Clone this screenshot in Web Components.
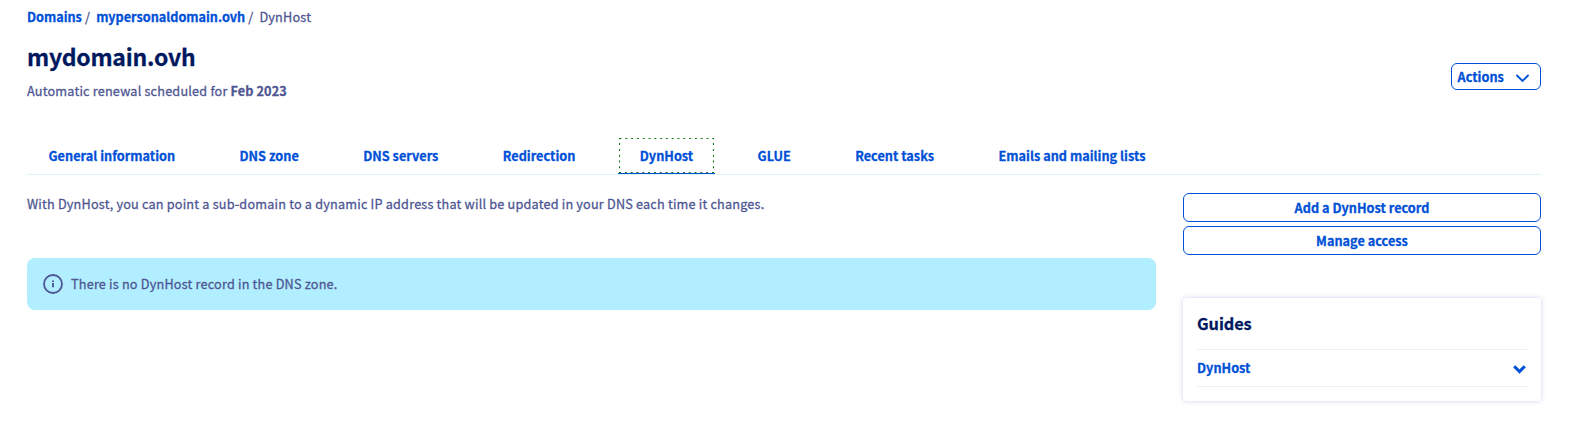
<!DOCTYPE html>
<html lang="en">
<head>
<meta charset="utf-8">
<title>DynHost</title>
<style>
body{margin:0;background:#fff;font-family:"Noto Sans CJK SC","Noto Sans",sans-serif;font-size:12.7px;letter-spacing:.185px;line-height:21px;color:#4d5592;-webkit-text-stroke:.27px}
</style>
</head>
<body>
<domain-page></domain-page>
<script>
function define(name, html) {
  const t = document.createElement('template');
  t.innerHTML = html;
  customElements.define(name, class extends HTMLElement {
    constructor() {
      super();
      this.attachShadow({ mode: 'open' }).append(t.content.cloneNode(true));
    }
  });
}

define('bread-crumb', `<style>
:host{display:flex;height:21px;white-space:pre}
::slotted(a){color:#0050d7;font-weight:700;font-size:12.7px;letter-spacing:-.02px}
</style><slot></slot>`);

define('action-button', `<style>
:host{display:flex;box-sizing:border-box;align-items:center;justify-content:center;height:29px;border:1px solid #0050d7;border-radius:6px;color:#0050d7;font-size:12.7px;letter-spacing:.02px;font-weight:700;white-space:nowrap}
:host([menu]){width:90px;height:27px;justify-content:space-between;padding:0 11px 0 5.500px}
::slotted(svg){margin-top:3px}
</style><slot></slot><slot name="icon"></slot>`);

define('tab-item', `<style>
:host{display:block;box-sizing:border-box;height:36px;padding:7px 21.5px 0;color:#0050d7;font-size:12.7px;letter-spacing:.02px;font-weight:700;white-space:nowrap}
:host([active]){border-bottom:1px solid #0050d7;position:relative}
.focus{position:absolute;left:1px;top:0;width:95px;height:35px}
:host(:not([active])) .focus{display:none}
</style><slot></slot><svg class="focus" viewBox="0 0 95 35"><rect x=".5" y=".5" width="94" height="34" fill="none" stroke="#107810" stroke-width="1.1" stroke-dasharray="2 3.800"/></svg>`);

define('tab-bar', `<style>
:host{display:flex;gap:21.35px;height:36px;border-bottom:1px solid #dff2f8}
</style><slot></slot>`);

define('info-message', `<style>
:host{display:flex;align-items:center;gap:8px;box-sizing:border-box;height:52px;padding:0 0 1px 16px;border-radius:8px;background:#b1eeff}
svg{display:block}
</style><svg width="20" height="20" viewBox="0 0 20 20" fill="none" stroke="#4d5592"><circle cx="10" cy="10" r="9" stroke-width="1.8"/><path d="M10 6.500v1.400M10 9v4.300" stroke-width="1.9"/></svg><slot></slot>`);

define('guide-card', `<style>
:host{display:block;box-sizing:border-box;height:103px;padding:13px 14px;border-radius:4px;box-shadow:0 0 5px rgba(77,85,200,.28)}
h2{margin:0;height:38px;font-size:16.3px;letter-spacing:-.07px;line-height:24px;color:#00185e;font-weight:700}
.row{display:flex;align-items:center;justify-content:space-between;height:35px;padding-bottom:1px;border-top:1px solid #eee;border-bottom:1px solid #eee;color:#0050d7;font-size:12.7px;letter-spacing:.02px;font-weight:700}
svg{margin:3px 1px 0 0}
</style><h2><slot name="title"></slot></h2><div class="row"><slot></slot><svg width="13" height="9" viewBox="0 0 13 9" fill="none" stroke="#0050d7" stroke-width="3"><path d="M1.200 1.300 6.500 6.600l5.300-5.300"/></svg></div>`);

define('domain-page', `<style>
:host{display:block;box-sizing:border-box;width:1569px;height:425px;padding:6px 28px 0 27px;overflow:hidden}
header{display:flex;justify-content:space-between;height:111px}
h1{margin:15px 0 0;font-size:23px;letter-spacing:-.24px;line-height:28px;color:#00185e;font-weight:700}
b{font-size:12.7px;letter-spacing:.08px}
p{margin:0;white-space:nowrap}
.renew{margin-top:10px}
header action-button{margin-top:36px}
main{display:grid;grid-template-columns:1129px 358px;column-gap:27px;padding-top:18px}
.intro{margin:0 0 44px}
aside{display:flex;flex-direction:column;gap:4px}
guide-card{margin-top:39px}
</style>
<bread-crumb><a>Domains</a><span> /  </span><a>mypersonaldomain.ovh</a><span> /  </span><span>DynHost</span></bread-crumb>
<header><div><h1>mydomain.ovh</h1><p class="renew">Automatic renewal scheduled for <b>Feb 2023</b></p></div>
<action-button menu><span>Actions</span><svg slot="icon" width="13" height="9" viewBox="0 0 13 9" fill="none" stroke="#0050d7" stroke-width="1.800" stroke-linecap="round"><path d="M1 1.500 6.500 7 12 1.500"/></svg></action-button></header>
<tab-bar><tab-item>General information</tab-item><tab-item>DNS zone</tab-item><tab-item>DNS servers</tab-item><tab-item>Redirection</tab-item><tab-item active>DynHost</tab-item><tab-item>GLUE</tab-item><tab-item>Recent tasks</tab-item><tab-item>Emails and mailing lists</tab-item></tab-bar>
<main><section><p class="intro">With DynHost, you can point a sub-domain to a dynamic IP address that will be updated in your DNS each time it changes.</p>
<info-message><span>There is no DynHost record in the DNS zone.</span></info-message></section>
<aside><action-button>Add a DynHost record</action-button><action-button>Manage access</action-button>
<guide-card><span slot="title">Guides</span><span>DynHost</span></guide-card></aside></main>`);
</script>
</body>
</html>
